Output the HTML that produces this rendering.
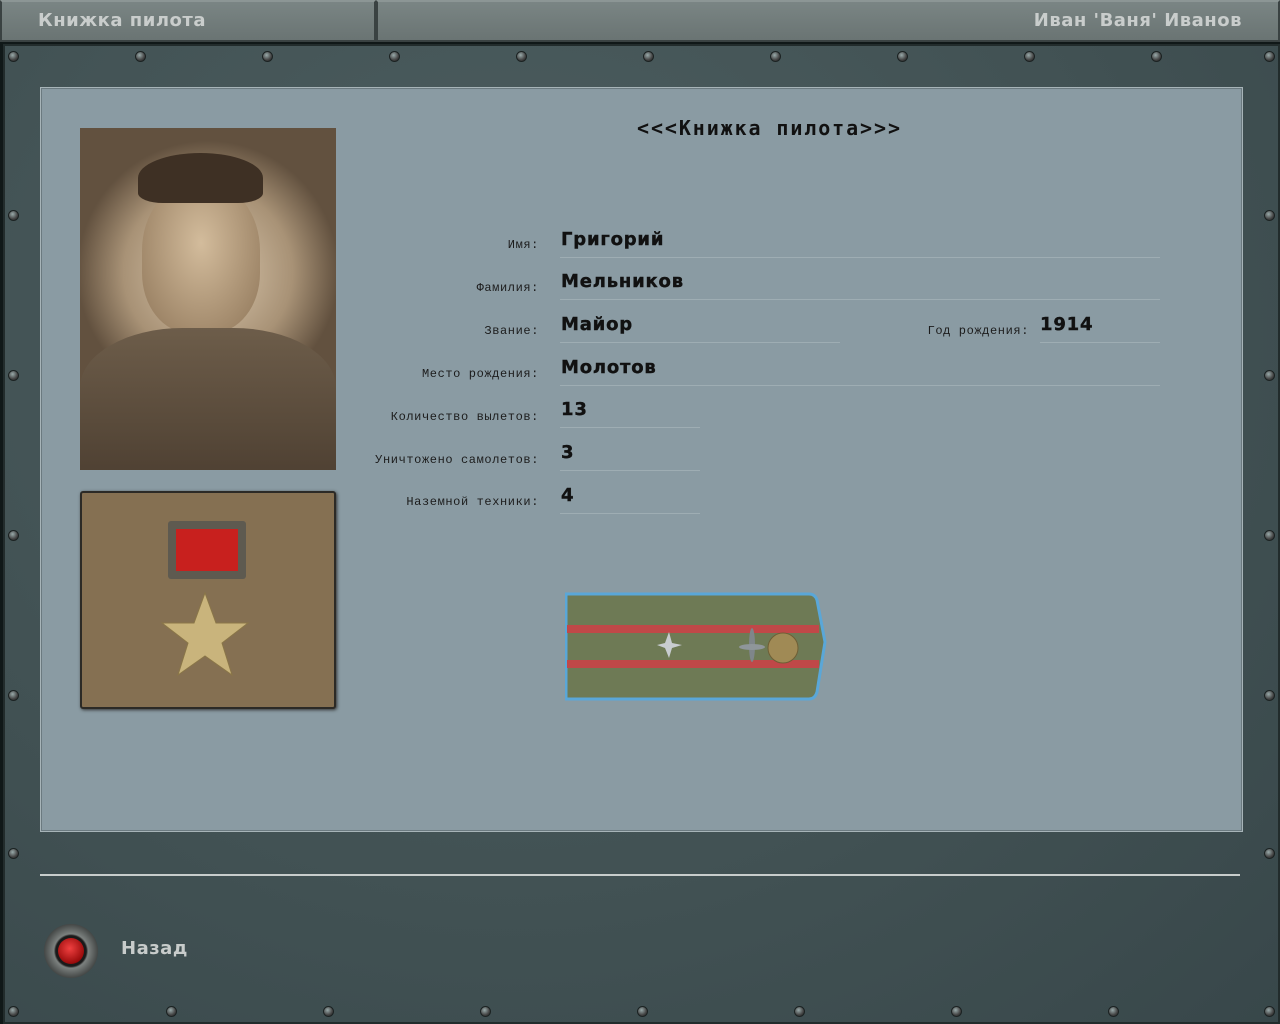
<!DOCTYPE html>
<html><head><meta charset="utf-8"><style>
*{margin:0;padding:0;box-sizing:border-box}
body{width:1280px;height:1024px;overflow:hidden;background:#101818;position:relative;font-family:"DejaVu Sans","Liberation Sans",sans-serif}
.top{position:absolute;top:0;height:42px;background:linear-gradient(#7a8584,#6a7473);border:2px solid #3a4242;border-top-color:#8c9695}
.top span{position:absolute;top:8px;font-weight:bold;font-size:18px;color:#c9cdcc;letter-spacing:0.5px;font-family:"DejaVu Sans",sans-serif}
.frame{position:absolute;left:3px;top:44px;width:1277px;height:980px;background:radial-gradient(ellipse at 40% 30%,#4d5e60,#415153 60%,#38474a);border:2px solid #222c2c}
.panel{position:absolute;left:40px;top:87px;width:1203px;height:745px;background:#8a9ba3;border:1px solid #a7b4b8;box-shadow:inset 0 0 0 1px #6b7a80}
.screw{position:absolute;width:11px;height:11px;border-radius:50%;background:radial-gradient(circle at 40% 35%,#9aa,#444 60%,#222);border:1px solid #1b2222}
.lbl{position:absolute;font-family:"Liberation Mono",monospace;font-size:12px;letter-spacing:0.6px;color:#1c1c1c;text-align:right;width:300px}
.val{position:absolute;font-family:"DejaVu Sans",sans-serif;font-weight:bold;font-size:18px;letter-spacing:0.8px;color:#111;-webkit-text-stroke:0.4px #111}
.ln{position:absolute;height:1px;background:#5c5a58;border-bottom:1px solid #9eadb3}
</style></head><body>
<div class="top" style="left:0;width:376px"><span style="left:36px">Книжка пилота</span></div>
<div class="top" style="left:376px;width:904px"><span style="right:36px">Иван 'Ваня' Иванов</span></div>
<div class="frame"></div>
<div class="screw" style="left:8px;top:51px"></div><div class="screw" style="left:135px;top:51px"></div><div class="screw" style="left:262px;top:51px"></div><div class="screw" style="left:389px;top:51px"></div><div class="screw" style="left:516px;top:51px"></div><div class="screw" style="left:643px;top:51px"></div><div class="screw" style="left:770px;top:51px"></div><div class="screw" style="left:897px;top:51px"></div><div class="screw" style="left:1024px;top:51px"></div><div class="screw" style="left:1151px;top:51px"></div><div class="screw" style="left:1264px;top:51px"></div>
<div class="screw" style="left:8px;top:210px"></div><div class="screw" style="left:8px;top:370px"></div><div class="screw" style="left:8px;top:530px"></div><div class="screw" style="left:8px;top:690px"></div><div class="screw" style="left:8px;top:848px"></div><div class="screw" style="left:8px;top:1006px"></div>
<div class="screw" style="left:1264px;top:210px"></div><div class="screw" style="left:1264px;top:370px"></div><div class="screw" style="left:1264px;top:530px"></div><div class="screw" style="left:1264px;top:690px"></div><div class="screw" style="left:1264px;top:848px"></div><div class="screw" style="left:1264px;top:1006px"></div>
<div class="screw" style="left:166px;top:1006px"></div><div class="screw" style="left:323px;top:1006px"></div><div class="screw" style="left:480px;top:1006px"></div><div class="screw" style="left:637px;top:1006px"></div><div class="screw" style="left:794px;top:1006px"></div><div class="screw" style="left:951px;top:1006px"></div><div class="screw" style="left:1108px;top:1006px"></div>
<div class="panel"></div>
<!-- photo -->
<div style="position:absolute;left:80px;top:128px;width:256px;height:342px;background:radial-gradient(ellipse 60% 45% at 50% 42%,#dccab0,#a89276 55%,#62513f 85%);overflow:hidden">
<div style="position:absolute;left:62px;top:55px;width:118px;height:150px;border-radius:45% 45% 40% 40%;background:radial-gradient(ellipse at 50% 40%,#d3bc9c,#8f7659)"></div>
<div style="position:absolute;left:58px;top:25px;width:125px;height:50px;border-radius:50% 50% 20% 20%;background:#3e3024"></div>
<div style="position:absolute;left:0;top:200px;width:256px;height:150px;border-radius:40% 40% 0 0;background:linear-gradient(#6d5d4a,#4e4032)"></div>
</div>
<!-- medal -->
<div style="position:absolute;left:80px;top:491px;width:256px;height:218px;background:#857052;border:2px solid #2c2a26;border-radius:3px;box-shadow:1px 1px 3px #333">
<div style="position:absolute;left:86px;top:28px;width:78px;height:58px;background:#5e5a50;border-radius:3px"></div>
<div style="position:absolute;left:94px;top:36px;width:62px;height:42px;background:#c8201e"></div>
<svg style="position:absolute;left:78px;top:98px" width="90" height="86" viewBox="0 0 90 86"><polygon points="45,2 56,32 88,32 62,52 72,84 45,65 18,84 28,52 2,32 34,32" fill="#c9b47c" stroke="#8a7648"/></svg>
</div>
<div style="position:absolute;left:637px;top:116px;white-space:nowrap;font-family:'DejaVu Sans Mono',monospace;font-weight:bold;font-size:20px;letter-spacing:1.9px;color:#111">&lt;&lt;&lt;Книжка пилота&gt;&gt;&gt;</div>
<div class="lbl" style="left:239px;top:238px">Имя:</div><div class="val" style="left:561px;top:229px">Григорий</div><div class="ln" style="left:560px;top:257px;width:600px"></div>
<div class="lbl" style="left:239px;top:281px">Фамилия:</div><div class="val" style="left:561px;top:271px">Мельников</div><div class="ln" style="left:560px;top:299px;width:600px"></div>
<div class="lbl" style="left:239px;top:324px">Звание:</div><div class="val" style="left:561px;top:314px">Майор</div><div class="ln" style="left:560px;top:342px;width:280px"></div>
<div class="lbl" style="left:729px;top:324px">Год рождения:</div><div class="val" style="left:1040px;top:314px">1914</div><div class="ln" style="left:1040px;top:342px;width:120px"></div>
<div class="lbl" style="left:239px;top:367px">Место рождения:</div><div class="val" style="left:561px;top:357px">Молотов</div><div class="ln" style="left:560px;top:385px;width:600px"></div>
<div class="lbl" style="left:239px;top:410px">Количество вылетов:</div><div class="val" style="left:561px;top:399px">13</div><div class="ln" style="left:560px;top:427px;width:140px"></div>
<div class="lbl" style="left:239px;top:453px">Уничтожено самолетов:</div><div class="val" style="left:561px;top:442px">3</div><div class="ln" style="left:560px;top:470px;width:140px"></div>
<div class="lbl" style="left:239px;top:495px">Наземной техники:</div><div class="val" style="left:561px;top:485px">4</div><div class="ln" style="left:560px;top:513px;width:140px"></div>
<!-- shoulder board -->
<svg style="position:absolute;left:565px;top:592px" width="262" height="110" viewBox="0 0 262 110">
<path d="M1,2 H244 Q250,2 252,8 L260,50 L252,100 Q250,107 244,107 H1 Z" fill="#6e7a55" stroke="#5aa7d8" stroke-width="3"/>
<rect x="2" y="33" width="252" height="8" fill="#c04848"/><rect x="2" y="68" width="252" height="8" fill="#c04848"/>
<polygon points="104,40 107,51 117,53 107,56 104,66 100,56 92,53 100,51" fill="#c8ccd0"/>
<ellipse cx="187" cy="53" rx="3" ry="17" fill="#7f868a"/><ellipse cx="187" cy="55" rx="13" ry="3" fill="#8f969a"/>
<circle cx="218" cy="56" r="15" fill="#a08a55" stroke="#6f5e35"/>
</svg>
<div style="position:absolute;left:40px;top:874px;width:1200px;height:2px;background:#c8cdcc"></div>
<div style="position:absolute;left:44px;top:924px;width:54px;height:54px;border-radius:50%;background:radial-gradient(circle,#1a1a1a 40%,#7c817f 45%,#3a3d3c 75%,#222 100%)"></div>
<div style="position:absolute;left:58px;top:938px;width:26px;height:26px;border-radius:50%;background:radial-gradient(circle at 45% 40%,#f04040,#9a0c0c 70%,#300)"></div>
<div style="position:absolute;left:121px;top:938px;font-weight:bold;font-size:18px;color:#c8cccb;letter-spacing:0.5px">Назад</div>
</body></html>
